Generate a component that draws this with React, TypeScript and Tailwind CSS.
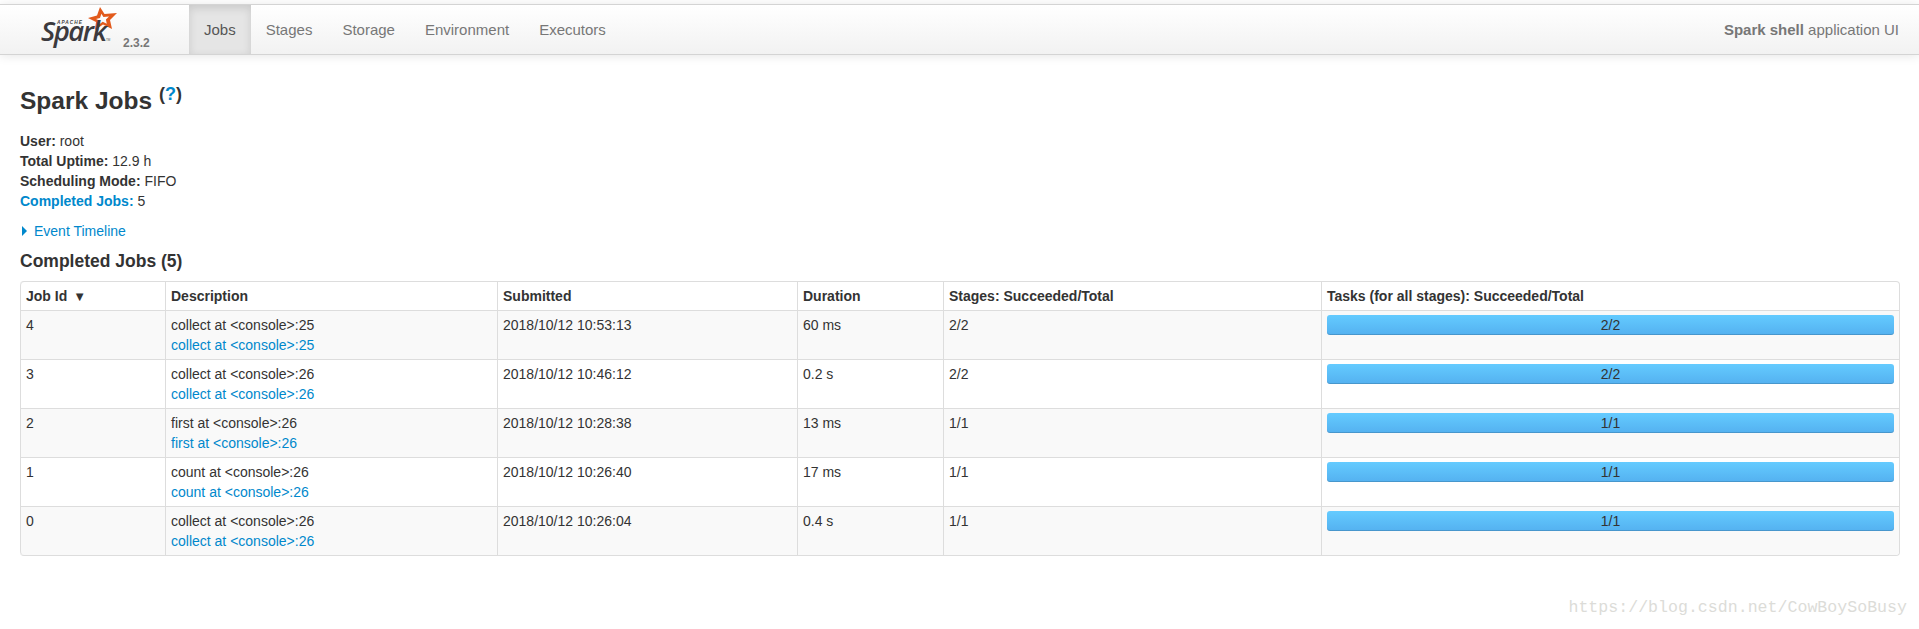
import React from 'react';

const jobs = [
  { id: 4, desc: 'collect at <console>:25', submitted: '2018/10/12 10:53:13', duration: '60 ms', stages: '2/2', tasks: '2/2' },
  { id: 3, desc: 'collect at <console>:26', submitted: '2018/10/12 10:46:12', duration: '0.2 s', stages: '2/2', tasks: '2/2' },
  { id: 2, desc: 'first at <console>:26', submitted: '2018/10/12 10:28:38', duration: '13 ms', stages: '1/1', tasks: '1/1' },
  { id: 1, desc: 'count at <console>:26', submitted: '2018/10/12 10:26:40', duration: '17 ms', stages: '1/1', tasks: '1/1' },
  { id: 0, desc: 'collect at <console>:26', submitted: '2018/10/12 10:26:04', duration: '0.4 s', stages: '1/1', tasks: '1/1' },
];

const navItems = ['Stages', 'Storage', 'Environment', 'Executors'];

const SparkLogo = () => (
  <svg width="80" height="48" viewBox="0 0 80 48" className="block">
    {/* star */}
    <path
      fillRule="evenodd"
      fill="#e25a1c"
      d="M59 1 L63.5 8 L76 7 L69 14 L71 23 L62 18.5 L54 24 L55 16 L47 12 L56 9.5 Z M60.4 7.7 L59 11.9 L55 12.9 L58.6 14.7 L58.1 18.4 L61.7 15.7 L65.8 17.7 L64.9 13.6 L68 10.4 L62.4 10.9 Z"
    />
    <text x="16" y="17.5" fontFamily="'Liberation Sans', sans-serif" fontSize="4.8" fontWeight="700" fontStyle="italic" letterSpacing="1" fill="#444">APACHE</text>
    <text x="0" y="35" fontFamily="'Open Sans', sans-serif" fontSize="27.5" fontStyle="italic" fontWeight="600" letterSpacing="-1.5" fill="#3c3a3e">Spark</text>
    <text x="65" y="35" fontFamily="'Liberation Sans', sans-serif" fontSize="3" fill="#555">TM</text>
  </svg>
);

export default function App() {
  return (
    <div className="relative min-h-[629px] overflow-hidden bg-white pt-1 font-['Liberation_Sans',Arial,sans-serif] text-sm leading-5 text-[#333333]">
      <nav className="flex h-[51px] items-stretch justify-between border-y border-[#d4d4d4] bg-gradient-to-b from-white to-[#f2f2f2] text-[15px] shadow-[0_1px_10px_rgba(0,0,0,0.1)]">
        <div className="flex items-stretch">
          <div className="flex w-[189px] shrink-0 pl-[41px] pt-[1px]">
            <SparkLogo />
            <span className="ml-[2px] mt-[29px] text-xs font-bold leading-4 text-[#777777]">2.3.2</span>
          </div>
          <a className="flex items-center bg-[#e5e5e5] px-[15px] text-[#555555] shadow-[inset_0_3px_8px_rgba(0,0,0,0.125)]">Jobs</a>
          {navItems.map((item) => (
            <a key={item} className="flex items-center px-[15px] text-[#777777]">{item}</a>
          ))}
        </div>
        <p className="flex items-center pr-5 text-[#777777]">
          <strong className="font-bold">Spark shell</strong>&nbsp;application UI
        </p>
      </nav>

      <main className="px-5">
        <h3 className="mt-[26px] h-[40px] text-[24.5px] font-bold leading-10">
          Spark Jobs{' '}
          <sup className="text-[18px] font-bold leading-none">
            (<a className="text-[#0088cc]">?</a>)
          </sup>
        </h3>

        <ul className="mt-[10px]">
          <li><strong>User:</strong> root</li>
          <li><strong>Total Uptime:</strong> 12.9 h</li>
          <li><strong>Scheduling Mode:</strong> FIFO</li>
          <li><a className="font-bold text-[#0088cc]">Completed Jobs:</a> 5</li>
        </ul>

        <div className="mt-[10px] flex items-center text-[#0088cc]">
          <span className="ml-[2px] mr-[7px] h-0 w-0 border-y-[5px] border-l-[5px] border-y-transparent border-l-[#0088cc]" />
          <a>Event Timeline</a>
        </div>

        <h4 className="mt-[10px] h-[30px] text-[17.5px] font-bold leading-[20px]">Completed Jobs (5)</h4>

        <table className="w-[1880px] table-fixed border-separate border-spacing-0 rounded border border-l-0 border-[#dddddd]">
          <colgroup>
            <col className="w-[145px]" />
            <col className="w-[332px]" />
            <col className="w-[300px]" />
            <col className="w-[146px]" />
            <col className="w-[378px]" />
            <col />
          </colgroup>
          <thead>
            <tr className="text-left font-bold">
              <th className="rounded-tl border-l border-[#dddddd] px-[5px] py-1 whitespace-nowrap">
                <div className="flex h-5 items-center">
                  Job Id<span className="ml-[6px] text-[13px] leading-none">▼</span>
                </div>
              </th>
              <th className="border-l border-[#dddddd] px-[5px] py-1">Description</th>
              <th className="border-l border-[#dddddd] px-[5px] py-1">Submitted</th>
              <th className="border-l border-[#dddddd] px-[5px] py-1">Duration</th>
              <th className="border-l border-[#dddddd] px-[5px] py-1">Stages: Succeeded/Total</th>
              <th className="border-l border-[#dddddd] px-[5px] py-1">Tasks (for all stages): Succeeded/Total</th>
            </tr>
          </thead>
          <tbody>
            {jobs.map((job, i) => (
              <tr key={job.id} className={i % 2 === 0 ? 'bg-[#f9f9f9]' : 'bg-white'}>
                <td className={`border-l border-t border-[#dddddd] px-[5px] py-1 align-top ${i === jobs.length - 1 ? 'rounded-bl' : ''}`}>{job.id}</td>
                <td className="border-l border-t border-[#dddddd] px-[5px] py-1 align-top">
                  <div>{job.desc}</div>
                  <a className="block text-[#0088cc]">{job.desc}</a>
                </td>
                <td className="border-l border-t border-[#dddddd] px-[5px] py-1 align-top">{job.submitted}</td>
                <td className="border-l border-t border-[#dddddd] px-[5px] py-1 align-top">{job.duration}</td>
                <td className="border-l border-t border-[#dddddd] px-[5px] py-1 align-top">{job.stages}</td>
                <td className={`border-l border-t border-[#dddddd] px-[5px] py-1 align-top ${i === jobs.length - 1 ? 'rounded-br' : ''}`}>
                  <div className="mb-5 h-5 rounded-[3px] bg-gradient-to-b from-[#64cbff] to-[#54b1f0] text-center text-sm leading-5 shadow-[inset_0_-1px_0_rgba(0,0,0,0.15)]">
                    {job.tasks}
                  </div>
                </td>
              </tr>
            ))}
          </tbody>
        </table>
      </main>

      <div className="absolute right-[12px] top-[598px] font-['Liberation_Mono',monospace] text-[16.6px] leading-5 text-[#dcdcd8]">
        https://blog.csdn.net/CowBoySoBusy
      </div>
    </div>
  );
}
